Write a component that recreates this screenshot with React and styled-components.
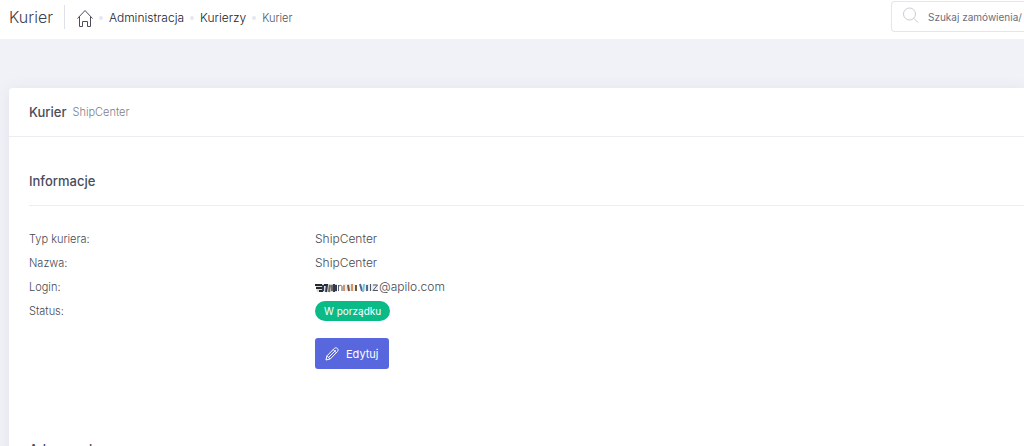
import React from "react";
import styled, { createGlobalStyle } from "styled-components";

const details = [
  { label: "Typ kuriera:", value: "ShipCenter" },
  { label: "Nazwa:", value: "ShipCenter" },
  { label: "Login:", value: "@apilo.com", masked: true },
];

const HomeIcon = () => (
  <svg width="16" height="18" viewBox="0 0 16 18" fill="none" stroke="#4a4f5c">
    <path d="M.5 9.500 8 1.500l7.500 8" />
    <path d="M2.500 7.600v9.900h3v-5h5v5h3V7.600" />
  </svg>
);

const SearchIcon = () => (
  <svg width="18" height="18" viewBox="0 0 18 18" fill="none" stroke="#c9ccd6">
    <circle cx="7.5" cy="7" r="6" />
    <path d="m12 11.500 4 4" />
  </svg>
);

const PencilIcon = () => (
  <svg width="14" height="14" viewBox="0 0 14 14" fill="none" stroke="#fff">
    <path d="M1 13l1-4.2L9.4 1.4c1-1 2.2-.7 3 .1s1.1 2 .1 3L5.200 12 1 13z" />
    <path d="M2 8.800 5.200 12M3.600 10.400l7.200-7.200M8.200 2.600l3.200 3.200" />
  </svg>
);

const LoginMask = () => (
  <svg width="64" height="12" viewBox="0 0 64 12" aria-hidden="true">
    <path d="M0 3h22v8H2z" fill="#d5dce0" />
    <path d="M28 3h12v7H28zM49 3h14v7H49z" fill="#e9eef0" />
    <g fill="none" strokeWidth="2">
      <path d="M0 4h7M1 7h6M4 10h4M9 4h4" stroke="#26282d" />
      <path d="M8 4v6M12 4l-1 7M19 3v8M21 4v6" stroke="#303a54" />
      <path d="M15 4l-1 7M17 4v6" stroke="#77685a" />
      <path d="M29 4v6M37 3v7" stroke="#d9935f" />
      <path d="M33 4l1 6M41 4v6" stroke="#79523d" />
      <path d="M45 3l2 7M52 4v6" stroke="#55688a" />
      <path d="M49 3l-1 8" stroke="#74c5df" />
    </g>
    <path
      d="M23.500 10V4M23.500 5.500c2-2 3.500-1 3.500 .5v4M55.500 3v7M58 4h4.500L58 9.500h5"
      fill="none"
      stroke="#555a66"
    />
  </svg>
);

const App = () => {
  return (
    <>
      <GlobalStyle />
      <TopBar>
        <PageTitle>Kurier</PageTitle>
        <Breadcrumbs aria-label="Breadcrumb">
          <Crumb href="#" aria-label="Start">
            <HomeIcon />
          </Crumb>
          <Dot />
          <Crumb href="#">Administracja</Crumb>
          <Dot />
          <Crumb href="#">Kurierzy</Crumb>
          <Dot />
          <Crumb href="#" $current>
            Kurier
          </Crumb>
        </Breadcrumbs>
        <SearchBox>
          <SearchLabel htmlFor="search" aria-label="Szukaj">
            <SearchIcon />
          </SearchLabel>
          <SearchInput
            type="text"
            id="search"
            name="search"
            placeholder="Szukaj zamówienia/"
          />
        </SearchBox>
      </TopBar>
      <Card>
        <CardHeader>
          <CardTitle>Kurier</CardTitle>
          <CardSubtitle>ShipCenter</CardSubtitle>
        </CardHeader>
        <CardBody>
          <SectionTitle>Informacje</SectionTitle>
          <Details>
            {details.map(({ label, value, masked }) => (
              <DetailRow key={label}>
                <DetailLabel>{label}</DetailLabel>
                <DetailValue>
                  {masked && <LoginMask />}
                  {value}
                </DetailValue>
              </DetailRow>
            ))}
            <DetailRow>
              <DetailLabel>Status:</DetailLabel>
              <DetailValue>
                <Badge>W porządku</Badge>
              </DetailValue>
            </DetailRow>
          </Details>
          <Actions>
            <EditButton type="button">
              <PencilIcon />
              Edytuj
            </EditButton>
          </Actions>
          <SectionTitle>Adres nadawcy</SectionTitle>
        </CardBody>
      </Card>
    </>
  );
};

const GlobalStyle = createGlobalStyle`
  * {
    box-sizing: border-box;
  }

  html, body, #root {
    height: 100%;
  }

  body {
    margin: 0;
    overflow: hidden;
    background-color: #f1f2f8;
    color: #474952;
    font-family: Inter, "Liberation Sans", sans-serif;
    font-size: 12px;
    font-weight: 300;
  }
`;

const TopBar = styled.header`
  display: flex;
  align-items: flex-start;
  height: 39px;
  padding-left: 9px;
  background-color: #fff;
`;

const PageTitle = styled.h1`
  margin: 5px 12px 0 0;
  padding-right: 11px;
  border-right: 1px solid #dfe1ea;
  font-size: 16px;
  font-weight: 300;
  line-height: 24px;
  color: #3f424d;
`;

const Breadcrumbs = styled.nav`
  display: flex;
  align-items: center;
  height: 35px;
`;

const Crumb = styled.a`
  display: flex;
  color: ${({ $current }) => ($current ? "#50535f" : "#20222b")};
  font-size: ${({ $current }) => ($current ? "11px" : "12px")};
  text-decoration: none;
`;

const Dot = styled.span`
  width: 4px;
  height: 4px;
  margin: 0 6px;
  border-radius: 50%;
  background-color: #e5e7f1;
`;

const SearchBox = styled.div`
  display: flex;
  width: 133px;
  height: 31px;
  margin: 1px 0 0 auto;
  border: 1px solid #e4e6ee;
  border-right: none;
  border-radius: 4px 0 0 4px;
`;

const SearchLabel = styled.label`
  padding: 5px 8px 0 10px;
`;

const SearchInput = styled.input`
  flex: 1;
  min-width: 0;
  height: 30px;
  padding: 0;
  border: none;
  border-bottom: 1px solid #e4e6ee;
  background-color: #fff;
  font-family: inherit;
  font-size: 10px;
  color: #575962;

  &::placeholder {
    color: #6b6e7a;
  }
`;

const Card = styled.main`
  min-height: 100%;
  margin: 49px 0 0 9px;
  border-radius: 4px 0 0 0;
  background-color: #fff;
  box-shadow: 0 1px 15px rgba(69, 65, 78, 0.08);
`;

const CardHeader = styled.div`
  display: flex;
  align-items: center;
  gap: 6px;
  height: 49px;
  padding-left: 20px;
  border-bottom: 1px solid #ebedf2;
`;

const CardTitle = styled.h2`
  margin: 0;
  font-size: 13px;
  font-weight: 500;
  color: #4a4c5a;
`;

const CardSubtitle = styled.small`
  font-size: 11px;
  color: #7c7f8b;
`;

const CardBody = styled.div`
  padding: 32px 0 0 20px;
`;

const SectionTitle = styled.h3`
  margin: 0;
  padding-bottom: 12px;
  border-bottom: 1px solid #ebedf2;
  font-size: 13px;
  font-weight: 500;
  line-height: 24px;
  color: #4a4c5a;
`;

const Details = styled.dl`
  margin: 21px 0 0;
`;

const DetailRow = styled.div`
  display: grid;
  grid-template-columns: 286px 1fr;
  line-height: 24px;
`;

const DetailLabel = styled.dt`
  font-size: 11px;
`;

const DetailValue = styled.dd`
  display: flex;
  align-items: center;
  margin: 0;
`;

const Badge = styled.span`
  padding: 0 9px;
  border-radius: 10px;
  background-color: #0abb87;
  color: #fff;
  font-size: 10px;
  font-weight: 400;
  line-height: 20px;
`;

const Actions = styled.div`
  margin-bottom: 68px;
  padding: 15px 0 0 286px;
`;

const EditButton = styled.button`
  display: flex;
  align-items: center;
  gap: 7px;
  height: 31px;
  padding: 0 10px;
  border: none;
  border-radius: 3px;
  background-color: #5867dd;
  color: #fff;
  font-family: inherit;
  font-size: 11px;
  font-weight: 400;
`;

export default App;
